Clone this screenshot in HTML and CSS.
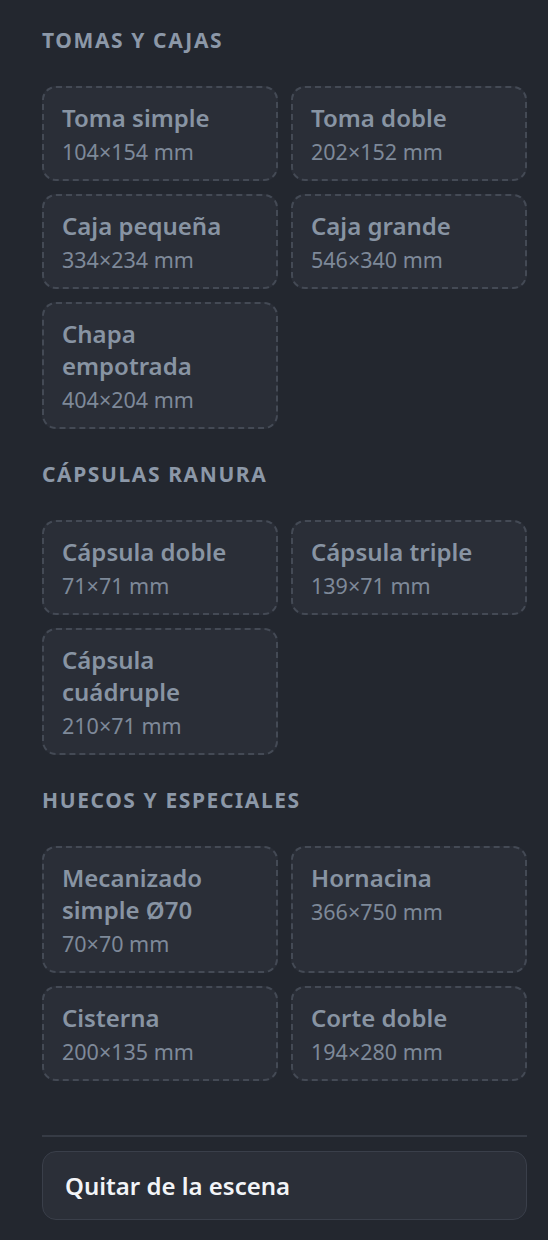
FILE: index.html
```html
<!DOCTYPE html>
<html lang="es">
<head>
  <meta charset="UTF-8">
  <title>Piezas</title>
  <link rel="stylesheet" href="styles.css">
</head>
<body>
  <div class="panel">
    <section class="group">
      <h2>Tomas y cajas</h2>
      <div class="grid">
        <div class="item"><p class="name">Toma simple</p><p class="size">104×154 mm</p></div>
        <div class="item"><p class="name">Toma doble</p><p class="size">202×152 mm</p></div>
        <div class="item"><p class="name">Caja pequeña</p><p class="size">334×234 mm</p></div>
        <div class="item"><p class="name">Caja grande</p><p class="size">546×340 mm</p></div>
        <div class="item"><p class="name">Chapa empotrada</p><p class="size">404×204 mm</p></div>
      </div>
    </section>

    <section class="group">
      <h2>Cápsulas ranura</h2>
      <div class="grid">
        <div class="item"><p class="name">Cápsula doble</p><p class="size">71×71 mm</p></div>
        <div class="item"><p class="name">Cápsula triple</p><p class="size">139×71 mm</p></div>
        <div class="item"><p class="name">Cápsula cuádruple</p><p class="size">210×71 mm</p></div>
      </div>
    </section>

    <section class="group">
      <h2>Huecos y especiales</h2>
      <div class="grid">
        <div class="item"><p class="name">Mecanizado simple Ø70</p><p class="size">70×70 mm</p></div>
        <div class="item"><p class="name">Hornacina</p><p class="size">366×750 mm</p></div>
        <div class="item"><p class="name">Cisterna</p><p class="size">200×135 mm</p></div>
        <div class="item"><p class="name">Corte doble</p><p class="size">194×280 mm</p></div>
      </div>
    </section>

    <hr class="divider">
    <button class="remove">Quitar de la escena</button>
  </div>
</body>
</html>
```

FILE: styles.css
```css
body {
  margin: 0;
  background: #23272f;
  font-family: "Noto Sans", "Open Sans", sans-serif;
}

.panel {
  padding: 26px 21px 20px 42px;
}

.group { margin-bottom: 31px; }

h2 {
  margin: 0 0 32px;
  font-size: 21px;
  line-height: 28px;
  font-weight: 700;
  letter-spacing: 1.6px;
  text-transform: uppercase;
  color: #8c98a8;
}

.grid {
  display: grid;
  grid-template-columns: 1fr 1fr;
  gap: 13px;
}

.item {
  padding: 14px 18px 12px;
  background: #2a2e37;
  border: 2px dashed #444a55;
  border-radius: 14px;
}

.name {
  margin: 0;
  font-size: 24px;
  line-height: 32px;
  font-weight: 600;
  color: #8894a3;
}

.size {
  margin: 3px 0 0;
  font-size: 21.5px;
  line-height: 30px;
  color: #7e8999;
}

.divider {
  margin: 54px 0 14px;
  border: 0;
  border-top: 2px solid #363b45;
}

.remove {
  display: block;
  width: 100%;
  height: 69px;
  padding: 0 22px;
  text-align: left;
  background: #2b2f38;
  border: 1px solid #3a3f4a;
  border-radius: 14px;
  font-family: inherit;
  font-size: 24px;
  font-weight: 600;
  color: #f2f4f7;
}
```
